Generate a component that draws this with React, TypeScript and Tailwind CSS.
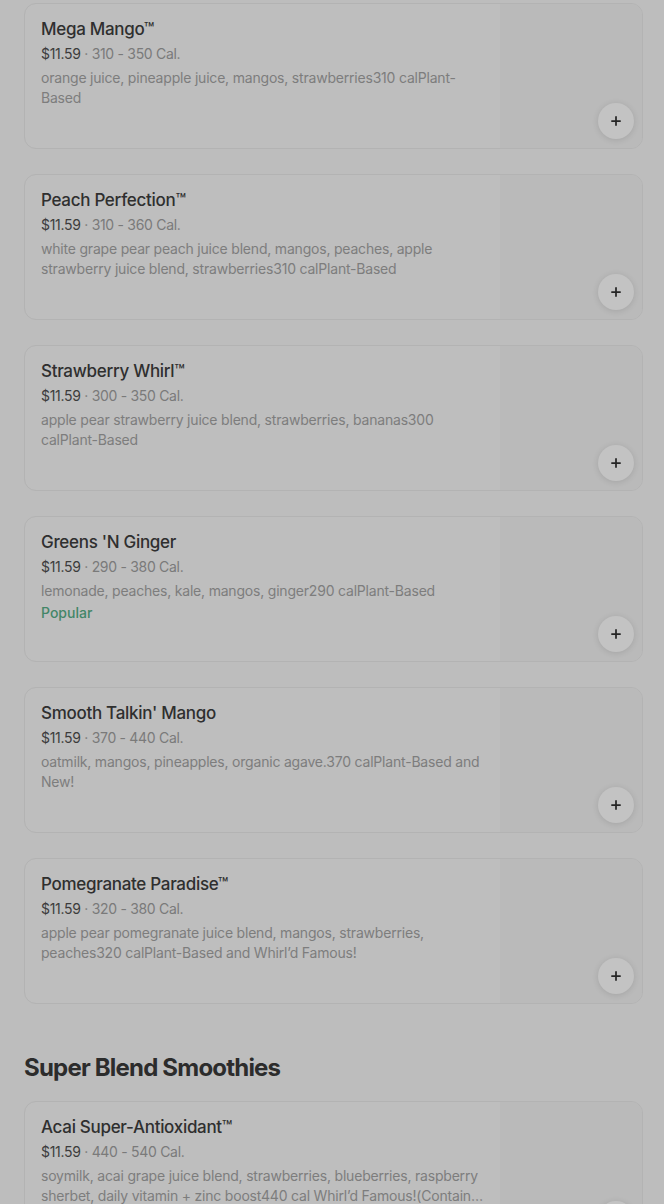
import React from 'react';
import { Plus } from 'lucide-react';

interface MenuItem {
  name: string;
  price: string;
  cal: string;
  description: string;
  popular?: boolean;
}

const classics: MenuItem[] = [
  {
    name: 'Mega Mango™',
    price: '$11.59',
    cal: '310 - 350 Cal.',
    description: 'orange juice, pineapple juice, mangos, strawberries310 calPlant-Based',
  },
  {
    name: 'Peach Perfection™',
    price: '$11.59',
    cal: '310 - 360 Cal.',
    description: 'white grape pear peach juice blend, mangos, peaches, apple strawberry juice blend, strawberries310 calPlant-Based',
  },
  {
    name: 'Strawberry Whirl™',
    price: '$11.59',
    cal: '300 - 350 Cal.',
    description: 'apple pear strawberry juice blend, strawberries, bananas300 calPlant-Based',
  },
  {
    name: "Greens 'N Ginger",
    price: '$11.59',
    cal: '290 - 380 Cal.',
    description: 'lemonade, peaches, kale, mangos, ginger290 calPlant-Based',
    popular: true,
  },
  {
    name: "Smooth Talkin' Mango",
    price: '$11.59',
    cal: '370 - 440 Cal.',
    description: 'oatmilk, mangos, pineapples, organic agave.370 calPlant-Based and New!',
  },
  {
    name: 'Pomegranate Paradise™',
    price: '$11.59',
    cal: '320 - 380 Cal.',
    description: 'apple pear pomegranate juice blend, mangos, strawberries, peaches320 calPlant-Based and Whirl’d Famous!',
  },
];

const superBlends: MenuItem[] = [
  {
    name: 'Acai Super-Antioxidant™',
    price: '$11.59',
    cal: '440 - 540 Cal.',
    description: 'soymilk, acai grape juice blend, strawberries, blueberries, raspberry sherbet, daily vitamin + zinc boost440 cal Whirl’d Famous!(Contains soy, milk, egg) Plant-Based',
  },
];

const MenuCard: React.FC<{ item: MenuItem }> = ({ item }) => (
  <div className="relative flex h-[146px] mb-[25px] rounded-xl border border-[#b3b3b3] bg-[#bebebe] overflow-hidden">
    {/* Text column */}
    <div className="flex-1 min-w-0 pl-4 pr-[14px] pt-[13px]">
      <h3 className="text-[17px] leading-6 font-medium tracking-[-0.3px] text-[#2f2f2f]">{item.name}</h3>
      <div className="mt-[3px] text-[14px] leading-5 tracking-[-0.3px] text-[#7a7a7a]">
        <span className="text-[#3c3c3c]">{item.price}</span> · {item.cal}
      </div>
      <p className="mt-1 text-[14px] leading-5 tracking-[-0.2px] text-[#7d7d7d] line-clamp-2">{item.description}</p>
      {item.popular && (
        <div className="mt-[2px] text-[14px] leading-5 font-medium text-[#438668]">Popular</div>
      )}
    </div>

    {/* Image placeholder */}
    <div className="w-[142px] shrink-0 bg-[#bababa]" />

    {/* Add button */}
    <button className="absolute right-2 bottom-[9px] w-9 h-9 rounded-full bg-[#c3c3c3] shadow-[0_1px_6px_rgba(0,0,0,0.12)] flex items-center justify-center">
      <Plus className="w-3.5 h-3.5 text-[#262626]" strokeWidth={3} />
    </button>
  </div>
);

export default function App() {
  return (
    <div
      className="min-h-[1204px] bg-[#bdbdbd] pt-[3px] pl-6 pr-[21px]"
      style={{ fontFamily: 'Inter, "Noto Sans", sans-serif' }}
    >
      {classics.map((item) => (
        <MenuCard key={item.name} item={item} />
      ))}

      <h2 className="pt-[23px] mb-[17px] text-[24px] leading-8 font-bold tracking-[-0.8px] text-[#2c2c2c]">
        Super Blend Smoothies
      </h2>

      {superBlends.map((item) => (
        <MenuCard key={item.name} item={item} />
      ))}
    </div>
  );
}
